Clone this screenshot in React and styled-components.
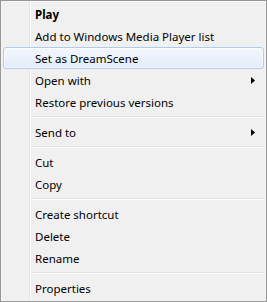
import React from "react";
import styled, { createGlobalStyle } from "styled-components";

const GlobalStyle = createGlobalStyle`
  html, body {
    margin: 0;
    padding: 0;
    background: #f0f0f0;
  }
`

const Menu = styled.div`
  width: 267px;
  height: 302px;
  box-sizing: border-box;
  border: 1px solid #979797;
  padding: 2px;
  background-color: #f0f0f0;
  background-image: linear-gradient(to right,
    transparent 28px, #e2e3e3 28px, #e2e3e3 29px,
    #ffffff 29px, #ffffff 30px, transparent 30px);
  box-shadow: inset 0 0 0 1px #f5f5f5;
  font-family: "Noto Sans", "Open Sans", sans-serif;
  font-size: 11.5px;
  color: #000;
  display: flex;
  flex-direction: column;
`

const Item = styled.div`
  height: 22px;
  box-sizing: border-box;
  display: flex;
  align-items: center;
  padding-left: 31px;
  padding-right: 8px;
  font-weight: ${props => (props.bold ? "bold" : "normal")};
  border: 1px solid ${props => (props.active ? "#aeccf1" : "transparent")};
  border-radius: 3px;
  background: ${props =>
    props.active ? "linear-gradient(to bottom, #f3f7fd, #e2ecf9)" : "transparent"};
  box-shadow: ${props => (props.active ? "inset 0 0 0 1px rgba(255,255,255,0.6)" : "none")};
  white-space: nowrap;
`

const Label = styled.span`
  flex: 1;
`

const Separator = styled.div`
  height: 8px;
  margin-left: 28px;
  display: flex;
  flex-direction: column;
  justify-content: center;

  &::before {
    content: "";
    display: block;
    height: 1px;
    background: #e0e0e0;
    border-bottom: 1px solid #ffffff;
  }
`

const Arrow = () => (
  <svg width="4" height="7" viewBox="0 0 4 7">
    <path d="M0 0 L4 3.5 L0 7 Z" fill="#000" />
  </svg>
)

const entries = [
  { label: "Play", bold: true },
  { label: "Add to Windows Media Player list" },
  { label: "Set as DreamScene", active: true },
  { label: "Open with", sub: true },
  { label: "Restore previous versions" },
  { sep: true },
  { label: "Send to", sub: true },
  { sep: true },
  { label: "Cut" },
  { label: "Copy" },
  { sep: true },
  { label: "Create shortcut" },
  { label: "Delete" },
  { label: "Rename" },
  { sep: true },
  { label: "Properties" },
]

export default function App() {
  return (
    <>
      <GlobalStyle />
      <Menu>
        {entries.map((entry, index) => {
          if (entry.sep) return <Separator key={index} />
          return (
            <Item key={index} bold={entry.bold} active={entry.active}>
              <Label>{entry.label}</Label>
              {entry.sub && <Arrow />}
            </Item>
          )
        })}
      </Menu>
    </>
  )
}
